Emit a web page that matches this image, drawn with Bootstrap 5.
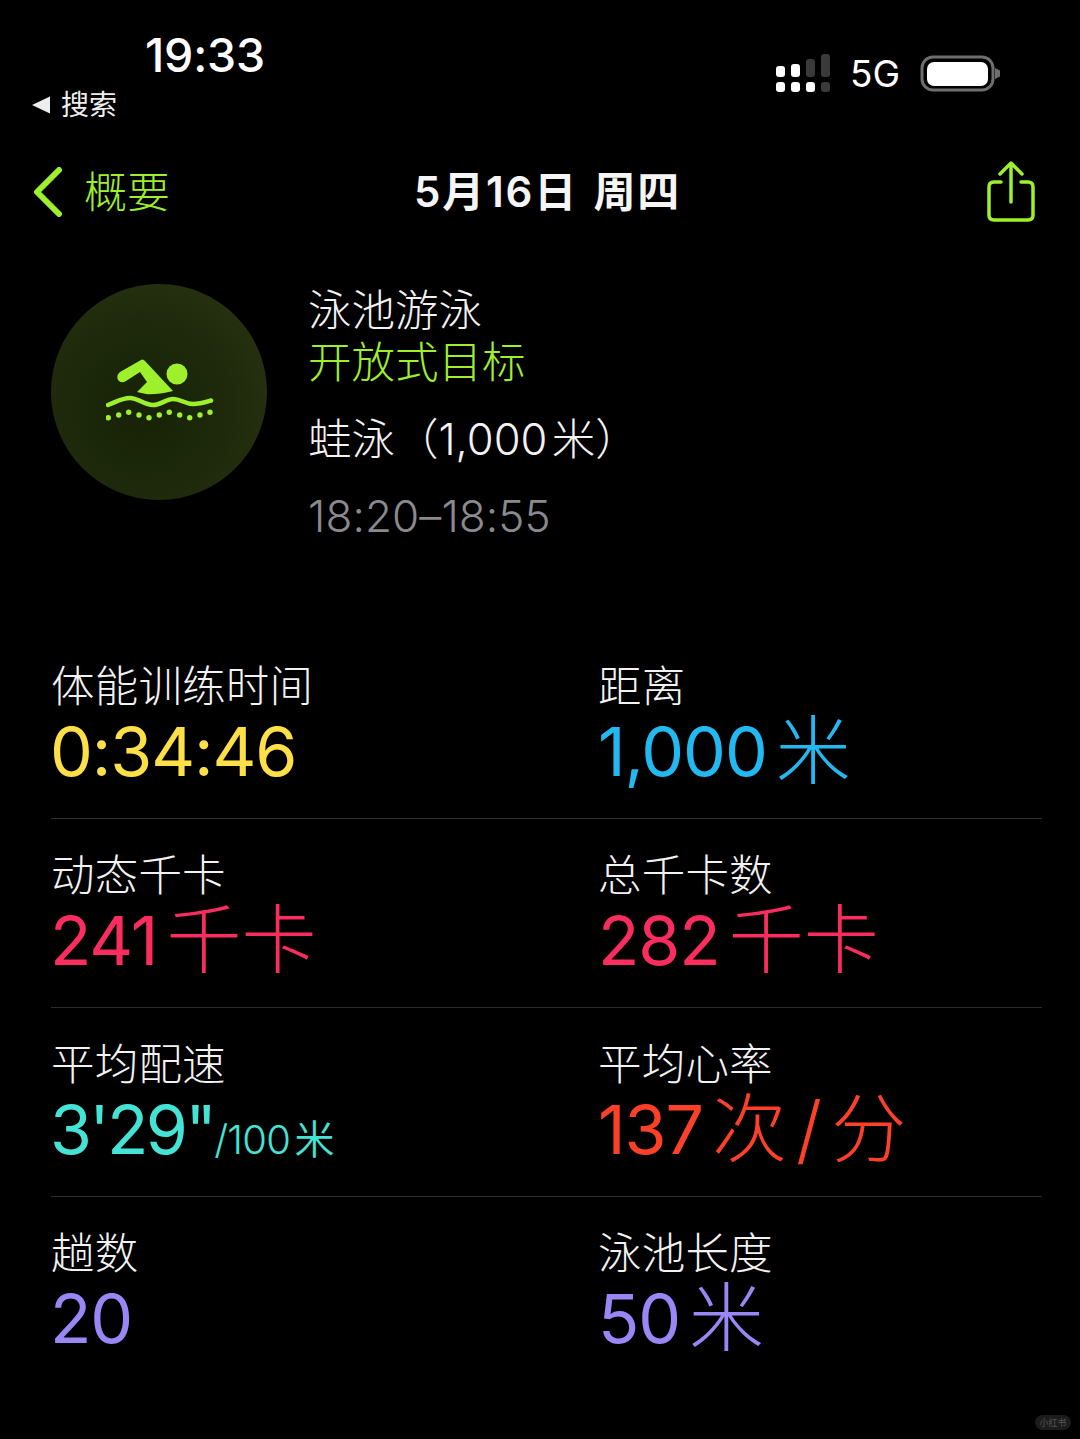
<!DOCTYPE html>
<html lang="zh-CN">
<head>
<meta charset="UTF-8">
<title>体能训练</title>
<link href="https://cdn.jsdelivr.net/npm/bootstrap@5.3.0/dist/css/bootstrap.min.css" rel="stylesheet">
<style>
    html, body { background: #000; }
    body { width: 1080px; height: 1439px; overflow: hidden; color: #f2f2f2; font-family: Inter, "Noto Sans CJK SC", sans-serif; font-weight: 400; }
    .status-area { height: 142px; padding: 30px 80px 0 32px; }
    .status-left { width: 200px; }
    .status-time { font-size: 46.5px; font-weight: 500; line-height: 50px; margin-left: 113px; color: #fff; letter-spacing: -.2px; }
    .status-back { font-size: 28px; line-height: 36px; margin-top: 7px; color: #eee; font-weight: 400; }
    .status-back svg { margin-right: 11px; }
    .status-right { padding-top: 24px; }
    .status-net { font-size: 37px; line-height: 40px; color: #fff; font-weight: 400; margin: 0 20px 0 19px; }
    .status-right > svg:first-child { margin-left: -1px; }
    .top-nav { height: 100px; padding: 0 44px 0 33px; position: relative; }
    .nav-back { color: #9ff02c; font-size: 43px; line-height: 50px; font-weight: 300; }
    .nav-back svg { margin-right: 21px; }
    .nav-title { margin-left: 244px; font-size: 42px; font-weight: 600; line-height: 50px; white-space: nowrap; color: #f5f5f5; letter-spacing: 1.8px; word-spacing: 3px; }
    .workout-head { padding: 42px 0 0 51px; height: 388px; }
    .workout-icon { width: 216px; height: 216px; border-radius: 50%; background: radial-gradient(circle at 42% 58%, #172206 0%, #1e2a0b 50%, #2a3613 100%); flex: none; }
    .workout-icon svg { margin: -6px 0 0 4px; }
    .workout-text { margin-left: 41px; }
    .wk-line { font-size: 43.5px; line-height: 52px; white-space: nowrap; font-weight: 300; }
    .wk-goal { color: #9ff02c; }
    .wk-stroke { margin-top: 25px; word-spacing: -8px; }
    .wk-time { color: #8a8a8e; margin-top: 25px; font-size: 44px; font-weight: 350; letter-spacing: .1px; }
    .metrics { margin: 0 38px 0 51px; }
    .metric-row { height: 189px; padding-top: 30px; border-bottom: 1px solid #2c2c2e; }
    .metric-row:last-child { border-bottom: 0; }
    .metric-cell:first-child { width: 547px; }
    .metric-label { font-size: 43.5px; line-height: 52px; white-space: nowrap; font-weight: 300; letter-spacing: .2px; }
    .metric-val { font-size: 68px; font-weight: 380; line-height: 78px; white-space: nowrap; letter-spacing: -1.1px; word-spacing: -9px; margin-left: -1px; }
    .metric-cell + .metric-cell .metric-val { margin-left: 0; }
    .metric-val .cjk { font-size: 75px; line-height: 0; letter-spacing: 0; font-weight: 300; word-spacing: -12px; vertical-align: -2px; }
    .metric-val .pace { letter-spacing: -2.700px; }
    .metric-val .tiny { font-size: 40px; line-height: 0; font-weight: 350; letter-spacing: -.8px; word-spacing: -6px; }
    .c-yellow { color: #fde047; }
    .c-blue { color: #22b8f0; }
    .c-pink { color: #fb2c5e; }
    .c-teal { color: #44e3d6; }
    .c-orange { color: #ff4028; }
    .c-purple { color: #9a87f5; }
    .watermark { position: absolute; right: 9px; bottom: 9px; width: 36px; height: 15px; border-radius: 8px; background: #1c1c1c; color: #555; font-size: 9px; line-height: 15px; text-align: center; font-weight: 400; }
</style>
</head>
<body class="position-relative">
    <!-- status bar -->
    <div class="status-area d-flex justify-content-between align-items-start">
        <div class="status-left">
            <div class="status-time">19:33</div>
            <div class="status-back d-flex align-items-center">
                <svg width="18" height="18" viewBox="0 0 18 18"><path d="M0 9 L18 0.5 V17.5 Z" fill="#eee"/></svg>
                <span>搜索</span>
            </div>
        </div>
        <div class="status-right d-flex align-items-center">
            <svg width="56" height="40" viewBox="0 0 56 40">
                <g fill="#fff">
                    <rect x="1" y="12" width="9" height="11" rx="3"/>
                    <rect x="16" y="10" width="9" height="13" rx="3"/>
                    <rect x="1" y="28" width="9" height="10" rx="3"/>
                    <rect x="16" y="28" width="9" height="10" rx="3"/>
                    <rect x="31" y="28" width="9" height="10" rx="3"/>
                </g>
                <g fill="#3a3a3a">
                    <rect x="31" y="5" width="9" height="18" rx="3"/>
                    <rect x="46" y="0" width="9" height="23" rx="3"/>
                    <rect x="46" y="28" width="9" height="10" rx="3"/>
                </g>
            </svg>
            <span class="status-net">5G</span>
            <svg width="80" height="38" viewBox="0 0 80 38">
                <rect x="2" y="2" width="71" height="33" rx="11" fill="none" stroke="#6e6e6e" stroke-width="3"/>
                <rect x="7" y="7" width="61" height="24" rx="7" fill="#fff"/>
                <path d="M75 13 L80 15.5 V21.5 L75 24 Z" fill="#6e6e6e"/>
            </svg>
        </div>
    </div>

    <!-- nav -->
    <div class="top-nav d-flex align-items-center">
        <div class="nav-back d-flex align-items-center">
            <svg width="30" height="50" viewBox="0 0 30 50"><path d="M26 3 L4 25 L26 47" fill="none" stroke="#9ff02c" stroke-width="6" stroke-linecap="round" stroke-linejoin="round"/></svg>
            <span>概要</span>
        </div>
        <div class="nav-title">5月16日 周四</div>
        <svg class="ms-auto" width="50" height="62" viewBox="0 0 50 62">
            <path d="M15 21 H8 Q3 21 3 26 V54 Q3 59 8 59 H42 Q47 59 47 54 V26 Q47 21 42 21 H35" fill="none" stroke="#9ff02c" stroke-width="3.500" stroke-linecap="round"/>
            <path d="M25 41 V3 M14 13 L25 2 L36 13" fill="none" stroke="#9ff02c" stroke-width="3.500" stroke-linecap="round" stroke-linejoin="round"/>
        </svg>
    </div>

    <!-- workout summary -->
    <div class="workout-head d-flex align-items-start">
        <div class="workout-icon d-flex align-items-center justify-content-center">
            <svg width="110" height="64" viewBox="0 0 110 64">
                <g fill="#9ff02c">
                    <circle cx="71" cy="17" r="10.5"/>
                    <path d="M14 15 L35 3 Q37 1.500 39 4 L67 34 Q50 38 40 37 L31 35 L41 25 L34 15 L20 24 Q15 27 12 23 Q10 18 14 15 Z"/>
                </g>
                <path d="M2 48 C10 45 16 41 24 41 C32 41 38 48 47 48 C55 48 60 42 67 42 C75 42 79 47 87 47 C94 47 100 45 105 43.500" fill="none" stroke="#9ff02c" stroke-width="4.500" stroke-linecap="round"/>
                <g fill="#9ff02c">
                    <circle cx="2.300" cy="60.700" r="2.700"/><circle cx="12.700" cy="58" r="2.700"/><circle cx="22.700" cy="55.300" r="2.700"/><circle cx="33" cy="58" r="2.700"/><circle cx="43" cy="60.700" r="2.700"/><circle cx="53.300" cy="58" r="2.700"/><circle cx="63.300" cy="55.300" r="2.700"/><circle cx="73.700" cy="58" r="2.700"/><circle cx="83.700" cy="60.700" r="2.700"/><circle cx="94" cy="58" r="2.700"/><circle cx="104" cy="55.300" r="2.700"/>
                </g>
            </svg>
        </div>
        <div class="workout-text">
            <div class="wk-line">泳池游泳</div>
            <div class="wk-line wk-goal">开放式目标</div>
            <div class="wk-line wk-stroke">蛙泳（1,000 米）</div>
            <div class="wk-line wk-time">18:20–18:55</div>
        </div>
    </div>

    <!-- metrics -->
    <div class="metrics" id="metrics"></div>
    <div class="watermark">小红书</div>

    <script>
        const rows = [
            [{ label: '体能训练时间', val: '0:34:46', color: 'c-yellow' }, { label: '距离', val: '1,000 <span class="cjk">米</span>', color: 'c-blue' }],
            [{ label: '动态千卡', val: '241 <span class="cjk">千卡</span>', color: 'c-pink' }, { label: '总千卡数', val: '282 <span class="cjk">千卡</span>', color: 'c-pink' }],
            [{ label: '平均配速', val: '<span class="pace">3\'29"</span><span class="tiny">/100 米</span>', color: 'c-teal' }, { label: '平均心率', val: '137 <span class="cjk">次 / 分</span>', color: 'c-orange' }],
            [{ label: '趟数', val: '20', color: 'c-purple' }, { label: '泳池长度', val: '50 <span class="cjk">米</span>', color: 'c-purple' }]
        ];
        document.getElementById('metrics').innerHTML = rows.map(r => `
            <div class="metric-row d-flex">
                ${r.map(m => `
                <div class="metric-cell">
                    <div class="metric-label">${m.label}</div>
                    <div class="metric-val ${m.color}">${m.val}</div>
                </div>`).join('')}
            </div>`).join('');
    </script>
    <script src="https://cdn.jsdelivr.net/npm/bootstrap@5.3.0/dist/js/bootstrap.bundle.min.js"></script>
</body>
</html>
